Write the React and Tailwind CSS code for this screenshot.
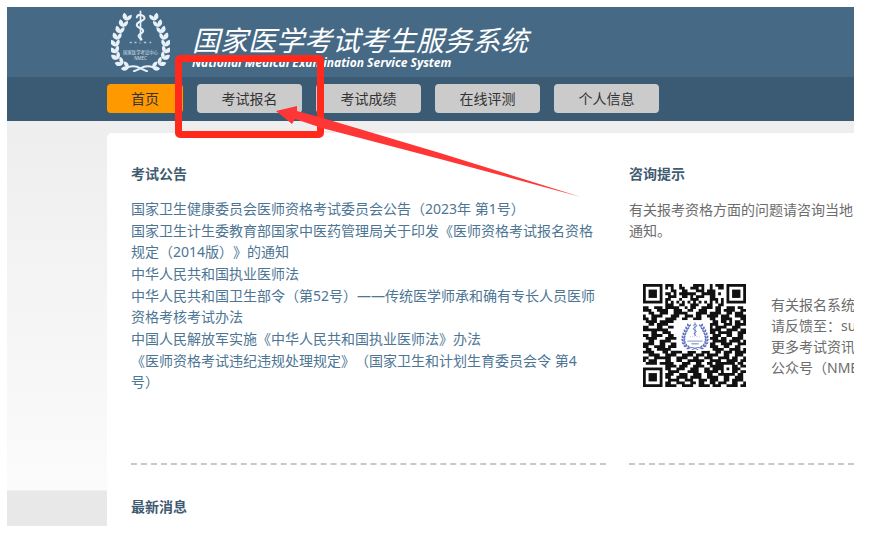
const NAV_ITEMS = ["考试报名", "考试成绩", "在线评测", "个人信息"];

const NOTICES = [
  ["国家卫生健康委员会医师资格考试委员会公告（2023年 第1号）"],
  ["国家卫生计生委教育部国家中医药管理局关于印发《医师资格考试报名资格", "规定（2014版）》的通知"],
  ["中华人民共和国执业医师法"],
  ["中华人民共和国卫生部令（第52号）——传统医学师承和确有专长人员医师", "资格考核考试办法"],
  ["中国人民解放军实施《中华人民共和国执业医师法》办法"],
  ["《医师资格考试违纪违规处理规定》（国家卫生和计划生育委员会令 第4", "号）"],
];

// [x, y, angle] of each leaf on the left branch, the right one is mirrored
const LEAVES = [
  [80, 38, 20],
  [69, 57, 18],
  [59, 76, 14],
  [51, 95, 8],
  [46, 115, 0],
  [45, 135, -10],
  [49, 154, -24],
  [60, 171, -44],
  [77, 183, -66],
];

// data modules, 37 x 37; the three finder squares are drawn separately
const QR_ROWS = [
  "........###..#....####..#.###........",
  "........#.#..##..###.#..#..##........",
  "..........##..##...###.###...........",
  "........##.#.######..#####.#.........",
  ".........###..##.#.###..##...........",
  "........##...#...###....###.#........",
  "........#.#.#.#.#.#.#.#.#.#.#........",
  "........###..##..###...##..##........",
  "##..###.#####..#.##..####.##..###.##.",
  "###..####..###..##..###...##.####..##",
  "..##..###..#####...####.####..##.###.",
  "#..####...###..###.##..####.###..####",
  "##.##...####..##..###...##..####...##",
  ".####.#####..............##.##.#.##.#",
  "..##.####...............###..###.####",
  "##...##..##.............#.####..###..",
  "#########...............####..####.##",
  "...##..###..............##.#####..###",
  "##.####..##..............###..##..##.",
  ".####...####............###.##..####.",
  "..##..####...............#####.####.#",
  "####..##..##............##..####..###",
  "##..####.###............###..##..##..",
  ".##..#####...............####..####.#",
  "####...##.####..###..###..##.###.####",
  "..####..####..####.###.####..##..###.",
  "##..######..####..##..###..####.##..#",
  "#.###...##..##..######..####..####.##",
  ".####.#####...###..##..##.#######.##.",
  "........####.###..####..#####...##.##",
  "........##..###..###..##.####.#.###..",
  ".........####...####..#####.#...##.##",
  "........###..###..###..##..######.##.",
  "........##..####.####..####..##..###.",
  ".........####..###..###.###..##.####.",
  "........##..###..##.##..##.###..##..#",
  "........####..####..####.###..####.##",
];

const FINDERS = [[0, 0], [30, 0], [0, 30]];

function Branch() {
  return (
    <g>
      {LEAVES.map(([x, y, angle]) => (
        <g key={y} transform={`translate(${x} ${y}) rotate(${angle})`}>
          <path d="M0 9C-15 8-17-3-13-11C-4-9 3-2 0 9Z" fill="currentColor" />
          <path d="M0 9C-4-1 3-10 10-13C15-4 10 6 0 9Z" fill="currentColor" />
        </g>
      ))}
      <path d="M80 187Q102 178 120 189L142 199" fill="none" stroke="currentColor" strokeWidth="6" />
    </g>
  );
}

function Emblem({ className, label }) {
  return (
    <svg viewBox="32 15 176 185" className={className} aria-hidden="true">
      <Branch />
      <g transform="translate(240 0) scale(-1 1)">
        <Branch />
      </g>
      <path d="M120 17V106" stroke="currentColor" strokeWidth="5" />
      <path
        d="M109 37C112 25 130 29 132 38C134 49 108 48 109 60C110 70 129 68 128 78C127 86 113 85 114 93C115 98 121 98 123 103"
        fill="none"
        stroke="currentColor"
        strokeWidth="6"
        strokeLinecap="round"
      />
      <path d="M88 112H94M102 112H108M117 113H120M130 112H137M147 112H152" stroke="currentColor" strokeWidth="4" opacity="0.7" />
      {label ? (
        <g fill="currentColor" textAnchor="middle" opacity="0.85">
          <text x="120" y="147" fontSize="13">国家医学考试中心</text>
          <text x="120" y="164" fontSize="13">NMEC</text>
        </g>
      ) : (
        <path d="M70 141H170M96 159H144" stroke="currentColor" strokeWidth="9" opacity="0.6" />
      )}
    </svg>
  );
}

function QrCode() {
  const cells = QR_ROWS.flatMap((row, y) =>
    [...row].map((c, x) => (c === "#" ? `M${x} ${y}h1v1h-1z` : ""))
  ).join("");

  return (
    <div className="relative size-[103px] shrink-0">
      <svg viewBox="0 0 37 37" className="size-full" role="img" aria-label="公众号二维码">
        <path d={cells} fill="#111" />
        {FINDERS.map(([x, y]) => (
          <g key={`${x}-${y}`} transform={`translate(${x} ${y})`}>
            <rect x="0.5" y="0.5" width="6" height="6" fill="#fff" stroke="#111" />
            <rect x="2" y="2" width="3" height="3" fill="#111" />
          </g>
        ))}
        <rect x="13" y="13" width="11" height="11" rx="1" fill="#fff" />
      </svg>
      <Emblem className="absolute inset-0 m-auto size-[28px] text-[#5b70bd]" />
    </div>
  );
}

function Header() {
  return (
    <header>
      <div className="flex h-[70px] gap-[22px] bg-[#466a86] pl-[104px] text-white">
        <Emblem className="mt-[3px] h-[62px] w-[59px] shrink-0 text-[#e8f1f8]" label />
        <div className="pt-[18px] italic whitespace-nowrap">
          <h1 className="text-[28px] leading-[30px]">国家医学考试考生服务系统</h1>
          <p className="text-[12px] leading-[16px] font-bold">National Medical Examination Service System</p>
        </div>
      </div>
      <nav className="flex h-[44px] gap-[14px] bg-[#3b5b75] pt-[7px] pl-[100px] text-center leading-[29px] text-[#333]">
        <a href="#home" className="h-[29px] w-[76px] rounded bg-[#ff9900]">首页</a>
        {NAV_ITEMS.map((item) => (
          <a key={item} href={`#${item}`} className="h-[29px] w-[105px] rounded bg-[#cbcbcb]">
            {item}
          </a>
        ))}
      </nav>
    </header>
  );
}

function Pointer() {
  return (
    <div className="pointer-events-none absolute top-[48px] left-[168px]">
      <div className="h-[83px] w-[149px] rounded-[5px] border-[7px] border-[#ff2a1c]" />
      <svg viewBox="175 55 410 145" className="absolute top-0 left-0 h-[145px] w-[410px] max-w-none" aria-hidden="true">
        <path d="M276 111L297 106L297 111L326 119L440 153L581 197L440 159L322 128L295 119L292 124Z" fill="#ff3636" />
      </svg>
    </div>
  );
}

export default function App() {
  return (
    <div
      lang="zh-CN"
      className="bg-white pt-[7px] pr-[35px] pb-2 pl-[7px] font-['Noto_Sans','Noto_Sans_CJK_SC',sans-serif] text-[14px] leading-[21px] [text-spacing-trim:space-all]"
    >
      <div className="relative overflow-hidden">
        <Header />
        <main className="bg-[linear-gradient(to_bottom,#eeeeee_0,#fbfbfb_369px,#e8e8e8_370px,#e8e8e8)] pt-3 pl-[100px]">
          <div className="rounded-tl-[5px] bg-white pt-[30px] pb-[9px] pl-6">
            <div className="grid grid-cols-[minmax(0,475fr)_minmax(0,225fr)] gap-x-[23px]">
              <section className="border-b-2 border-dashed border-[#c8c8c8] pb-[71px] whitespace-nowrap">
                <h2 className="font-bold text-[#3f5b70]">考试公告</h2>
                <ul className="mt-[14px] flex flex-col gap-px text-[#4d7594]">
                  {NOTICES.map((lines) => (
                    <li key={lines[0]}>
                      <a href="#notice" className="block">
                        {lines.map((line) => (
                          <span key={line} className="block">{line}</span>
                        ))}
                      </a>
                    </li>
                  ))}
                </ul>
              </section>

              <section className="overflow-hidden border-b-2 border-dashed border-[#c8c8c8] whitespace-nowrap text-[#6c6c6c]">
                <h2 className="font-bold text-[#3f5b70]">咨询提示</h2>
                <p className="mt-[15px]">
                  有关报考资格方面的问题请咨询当地
                  <br />
                  通知。
                </p>
                <div className="mt-[43px] ml-[14px] flex items-center gap-[25px]">
                  <QrCode />
                  <p>
                    有关报名系统
                    <br />
                    请反馈至：su
                    <br />
                    更多考试资讯
                    <br />
                    公众号（NME
                  </p>
                </div>
              </section>
            </div>

            <section className="pt-[31px]">
              <h2 className="font-bold text-[#3f5b70]">最新消息</h2>
            </section>
          </div>
        </main>
        <Pointer />
      </div>
    </div>
  );
}
